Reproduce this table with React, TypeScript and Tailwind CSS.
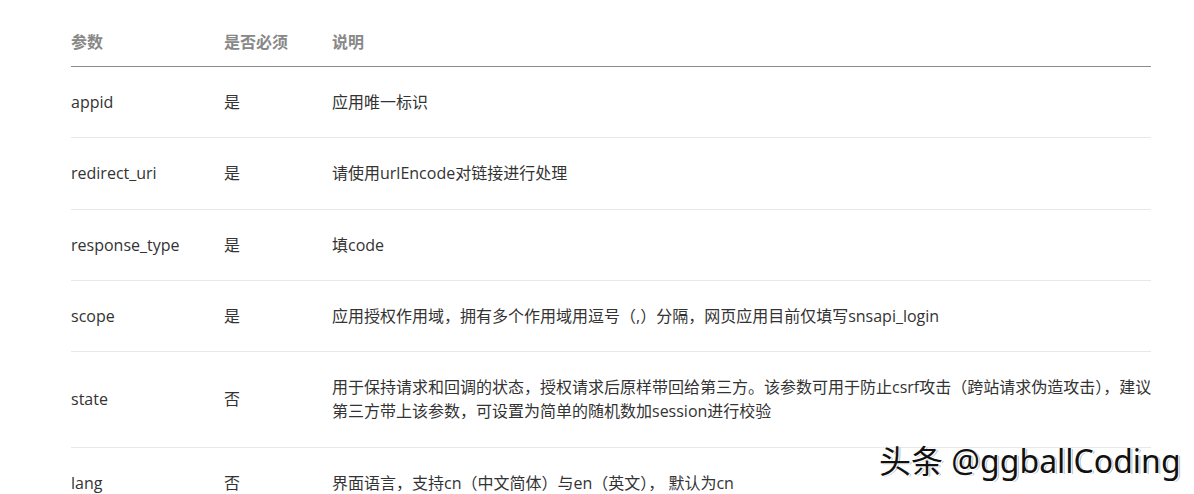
const rows = [
  { name: "appid", req: "是", pad: "py-[23px]", desc: ["应用唯一标识"] },
  { name: "redirect_uri", req: "是", pad: "pt-[23px] pb-[24px]", desc: ["请使用urlEncode对链接进行处理"] },
  { name: "response_type", req: "是", pad: "py-[23px]", desc: ["填code"] },
  {
    name: "scope",
    req: "是",
    pad: "py-[23px]",
    desc: ["应用授权作用域，拥有多个作用域用逗号（,）分隔，网页应用目前仅填写snsapi_login"],
  },
  {
    name: "state",
    req: "否",
    pad: "pt-[23px] pb-[24px]",
    desc: [
      "用于保持请求和回调的状态，授权请求后原样带回给第三方。该参数可用于防止csrf攻击（跨站请求伪造攻击），建议",
      "第三方带上该参数，可设置为简单的随机数加session进行校验",
    ],
  },
  { name: "lang", req: "否", pad: "py-[23px]", desc: ["界面语言，支持cn（中文简体）与en（英文）， 默认为cn"] },
];

export default function App() {
  return (
    <main
      className="relative h-[494px] w-[1194px] overflow-hidden bg-white pl-[71px] pt-[18px] text-[16px] leading-6 text-[#333]"
      style={{ fontFamily: '"Open Sans", "Noto Sans CJK SC", sans-serif' }}
    >
      <table className="w-[1080px] table-fixed border-collapse text-left">
        <colgroup>
          <col className="w-[153px]" />
          <col className="w-[108px]" />
          <col />
        </colgroup>
        <thead>
          <tr className="border-b border-[#8c8c8c]">
            <th className="pb-3 pt-3 font-bold text-[#888]">参数</th>
            <th className="pb-3 pt-3 font-bold text-[#888]">是否必须</th>
            <th className="pb-3 pt-3 font-bold text-[#888]">说明</th>
          </tr>
        </thead>
        <tbody>
          {rows.map((r) => (
            <tr key={r.name} className="border-b border-[#e8e8e8]">
              <td className={`${r.pad} align-middle`}>{r.name}</td>
              <td className={`${r.pad} align-middle`}>{r.req}</td>
              <td className={`${r.pad} whitespace-nowrap align-middle`}>
                {r.desc.map((line, i) => (
                  <div key={i}>{line}</div>
                ))}
              </td>
            </tr>
          ))}
        </tbody>
      </table>
      <div
        className="absolute left-[879px] top-[441px] whitespace-nowrap text-[32px] leading-10 text-[#111]"
        style={{
          fontFamily: '"Noto Sans", "Noto Sans CJK SC", sans-serif',
          textShadow: "1px 1px 0 #fff, 2px 1px 0 #bbb",
        }}
      >
        头条 @ggballCoding
      </div>
    </main>
  );
}
